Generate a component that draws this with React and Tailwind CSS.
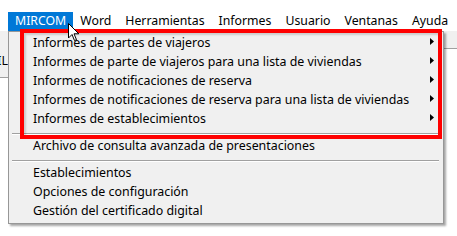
import React from "react";

const subItems = [
  "Informes de partes de viajeros",
  "Informes de parte de viajeros para una lista de viviendas",
  "Informes de notificaciones de reserva",
  "Informes de notificaciones de reserva para una lista de viviendas",
  "Informes de establecimientos",
];

const lowerItems = [
  "Establecimientos",
  "Opciones de configuración",
  "Gestión del certificado digital",
];

const menuBar = ["Word", "Herramientas", "Informes", "Usuario", "Ventanas", "Ayuda"];

function Item({ label, arrow }) {
  return (
    <div className="relative flex h-[19px] items-center pl-[24px] whitespace-nowrap text-black">
      {label}
      {arrow && (
        <svg className="absolute right-[9px] top-[4px]" width="4" height="7" viewBox="0 0 4 7">
          <polygon points="0,0 4,3.5 0,7" fill="#000" />
        </svg>
      )}
    </div>
  );
}

function Separator() {
  return (
    <div className="h-[8px] pt-[4px] ml-[3px] mr-[4px]">
      <div className="h-[2px] border-t border-[#a0a0a0] border-b border-b-white" />
    </div>
  );
}

export default function App() {
  return (
    <div className="relative h-[236px] w-[457px] overflow-hidden bg-white font-['Segoe_UI','Noto_Sans',sans-serif] text-[12px] leading-none">
      <div className="h-[12px]" />
      <div className="flex h-[19px] items-stretch pl-[8px] text-[12.3px]">
        <div className="flex items-center bg-[#0078d7] px-[7px] text-white">MIRCOM</div>
        {menuBar.map((m) => (
          <div key={m} className="flex items-center px-[7px] text-black">
            {m}
          </div>
        ))}
      </div>
      <div className="flex items-start">
        <div className="flex h-[47px] w-[8px] items-start justify-end overflow-hidden border-b border-[#a0a0a0] bg-[#f0f0f0] pt-[24px] text-[12.4px] text-black">
          <span className="whitespace-nowrap">IL</span>
        </div>
        <div className="h-[18px] flex-1 border-b border-[#a0a0a0] bg-[#f0f0f0]" />
      </div>

      {/* dropdown menu */}
      <div className="absolute left-[8px] top-[31px] w-[436px] border border-[#979797] bg-[#f0f0f0] py-[2px] text-[12.4px] shadow-[2px_2px_2px_rgba(0,0,0,0.35)]">
        {subItems.map((s) => (
          <Item key={s} label={s} arrow />
        ))}
        <Separator />
        <Item label="Archivo de consulta avanzada de presentaciones" />
        <Separator />
        {lowerItems.map((s) => (
          <Item key={s} label={s} />
        ))}
      </div>

      {/* red annotation rectangle */}
      <div className="absolute left-[20px] top-[29px] h-[110px] w-[422px] border-[4px] border-[#ff0000] shadow-[inset_2px_2px_2px_rgba(0,0,0,0.15)]" />

      {/* mouse cursor */}
      <svg className="absolute left-[68px] top-[23px]" width="12" height="19" viewBox="0 0 12 19">
        <polygon points="0.5,0.5 0.5,15 4,11.5 6.5,17.5 8.5,16.7 6,10.8 10.8,10.8" fill="#fff" stroke="#000" strokeWidth="1" strokeLinejoin="round" />
      </svg>
    </div>
  );
}
